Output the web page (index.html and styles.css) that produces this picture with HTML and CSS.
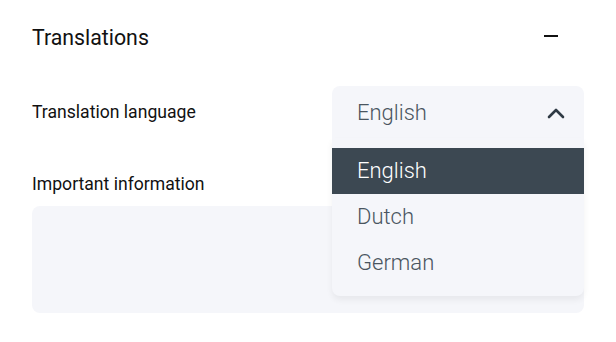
FILE: index.html
```html
<!DOCTYPE html>
<html lang="en">
<head>
  <meta charset="UTF-8" />
  <meta name="viewport" content="width=device-width, initial-scale=1.0"/>
  <title>Translations</title>
  <link rel="stylesheet" href="styles.css">
</head>
<body>
  <section class="panel">
    <header class="panel-header">
      <h2>Translations</h2>
      <button class="collapse" aria-label="Collapse">
        <svg width="16" height="16" viewBox="0 0 16 16"><path d="M1 7h14" stroke="#111" stroke-width="2"/></svg>
      </button>
    </header>

    <div class="field-row">
      <label class="field-label">Translation language</label>
      <div class="select">
        <div class="select-value">
          <span>English</span>
          <svg class="chevron" width="20" height="14" viewBox="0 0 20 14"><path d="M3 11l7-7 7 7" fill="none" stroke="#2f3a44" stroke-width="2.6" stroke-linecap="round" stroke-linejoin="round"/></svg>
        </div>
        <ul class="select-menu">
          <li class="active">English</li>
          <li>Dutch</li>
          <li>German</li>
        </ul>
      </div>
    </div>

    <div class="field">
      <label class="field-label">Important information</label>
      <textarea class="info"></textarea>
    </div>
  </section>
</body>
</html>
```

FILE: styles.css
```css
body {
  font-family: Roboto, 'Liberation Sans', sans-serif;
  margin: 0;
  padding: 0;
  background: white;
  color: #111;
}

.panel {
  padding: 0 32px;
}

.panel-header {
  display: flex;
  align-items: center;
  justify-content: space-between;
  height: 74px;
}

.panel-header h2 {
  margin: 0;
  font-size: 21.3px;
  font-weight: 400;
}

.collapse {
  background: none;
  border: none;
  padding: 0;
  margin-right: 25px;
  display: flex;
  cursor: pointer;
}

.field-row {
  display: grid;
  grid-template-columns: 1fr 252px;
  align-items: center;
  margin-top: 12px;
}

.field-label {
  font-size: 17.6px;
  line-height: 24px;
  color: #111;
}

.select {
  position: relative;
}

.select-value {
  display: flex;
  align-items: center;
  justify-content: space-between;
  height: 52px;
  padding: 0 18px 0 25px;
  background: #f5f6fa;
  border-radius: 8px 8px 0 0;
  font-size: 22px;
  font-weight: 300;
  color: #4a5560;
}

.chevron {
  margin-top: 2px;
}

.select-menu {
  position: absolute;
  top: 52px;
  left: 0;
  right: 0;
  list-style: none;
  margin: 0;
  padding: 10px 0;
  background: #f5f6fa;
  border-radius: 0 0 8px 8px;
  box-shadow: 0 4px 6px rgba(0, 0, 0, 0.06);
  z-index: 2;
}

.select-menu li {
  height: 46px;
  line-height: 46px;
  padding-left: 25px;
  font-size: 22px;
  font-weight: 300;
  color: #4a5560;
}

.select-menu li.active {
  background: #3c4852;
  color: white;
}

.field {
  margin-top: 34px;
}

.field .field-label {
  display: block;
}

.info {
  display: block;
  box-sizing: border-box;
  width: 100%;
  height: 107px;
  margin-top: 10px;
  border: none;
  border-radius: 8px;
  background: #f5f6fa;
  resize: none;
}
```
